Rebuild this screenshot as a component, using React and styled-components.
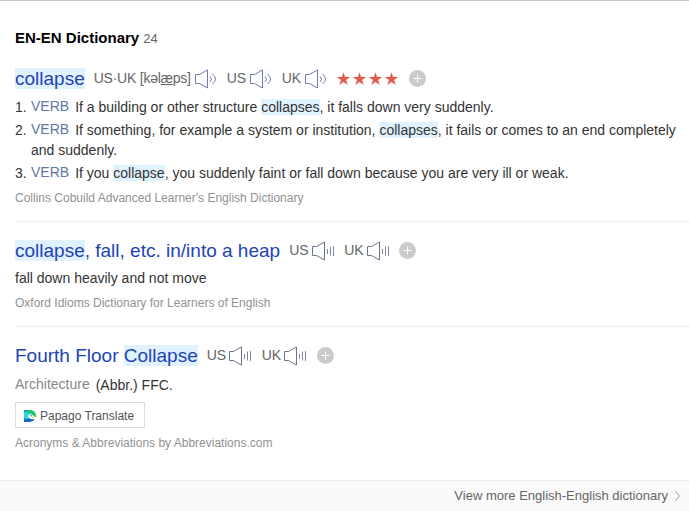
import React from "react";
import styled, { createGlobalStyle } from "styled-components";

const Global = createGlobalStyle`
  body { margin: 0; background: #fff; }
  * { box-sizing: border-box; }
`;

const Page = styled.main`
  display: flex;
  flex-direction: column;
  height: 511px;
  overflow: hidden;
  border-top: 1px solid #c6c6c6;
  background: #fff;
  color: #333;
  font: 14px/20px "Liberation Sans", Arial, sans-serif;
`;

const Header = styled.header`
  display: flex;
  align-items: baseline;
  gap: 4px;
  height: 61px;
  padding: 27px 0 0 15px;
`;

const Title = styled.h2`
  margin: 0;
  color: #000;
  font-size: 15px;
  line-height: 20px;
`;

const Count = styled.span`
  color: #666;
  font-size: 13px;
`;

const Entry = styled.section`
  height: ${(p) => p.$height}px;
  margin-left: 15px;
  padding-top: ${(p) => p.$top}px;
  border-bottom: ${(p) => (p.$last ? "0" : "1px solid #ececec")};
`;

const Heading = styled.div`
  display: flex;
  align-items: center;
  height: 24px;
  white-space: nowrap;
`;

const Word = styled.h3`
  margin: 0 9px 0 0;
  color: #2243b6;
  font-size: 19px;
  font-weight: 400;
  line-height: 24px;
`;

const Mark = styled.mark`
  background: #e1f2ff;
  color: inherit;
`;

const Pron = styled.span`
  display: flex;
  align-items: center;
  width: ${(p) => p.$width}px;
  color: #666;
`;

const Accent = styled.span`
  margin-right: ${(p) => p.$gap || 4}px;
  padding-bottom: 2px;
  letter-spacing: ${(p) => p.$spacing || 0}px;
`;

const Stars = styled.span`
  display: flex;
  gap: 2px;
  margin-right: 10px;
`;

const AddButton = styled.button`
  display: flex;
  width: 17px;
  height: 17px;
  margin-bottom: 1px;
  padding: 0;
  border: 0;
  border-radius: 50%;
  background: #cbcbcb;
`;

const Meanings = styled.ol`
  display: flex;
  flex-direction: column;
  gap: 3px;
  margin: 6px 0 0;
  padding: 0;
  list-style: none;
`;

const Meaning = styled.li`
  display: grid;
  grid-template-columns: 16px 1fr;
`;

const Tag = styled.span`
  margin-right: 6px;
  color: ${(p) => (p.$muted ? "#888" : "#6078a6")};
  line-height: 16px;
  vertical-align: 1px;
`;

const Text = styled.p`
  margin: ${(p) => p.$top || 0}px 0 0;
`;

const Source = styled.p`
  margin: ${(p) => p.$top}px 0 0;
  color: #929292;
  font-size: 12px;
  line-height: 16px;
`;

const Translate = styled.button`
  display: flex;
  align-items: center;
  gap: 4px;
  width: 130px;
  height: 26px;
  margin-top: 7px;
  padding: 1px 0 0 8px;
  border: 1px solid #dcdcdc;
  background: #fff;
  color: #555;
  font: 12px/16px "Liberation Sans", Arial, sans-serif;
`;

const Footer = styled.footer`
  display: flex;
  flex: 1;
  align-items: center;
  justify-content: flex-end;
  gap: 7px;
  padding-right: 9px;
  border-top: 1px solid #ebebeb;
  background: #fafafa;
  color: #666;
  font-size: 13px;
`;

const Glyph = styled.svg`
  display: block;
  flex: none;
`;

const Speaker = ({ bars }) => (
  <Glyph width="23" height="20" viewBox="0 0 23 20" fill="none" stroke="#7180ae">
    <path d="M.5 5.5H4.5L12.5 1V19L4.5 14.5H.5Z" stroke={bars ? "#68748e" : "#6a7bb0"} />
    {bars ? (
      <path d="M15.5 8V13M18.5 5.5V14.5M21.5 5V15" stroke="#7f88a8" />
    ) : (
      <path d="M15 7.5Q18 10 15 13M17.5 5Q23.5 10 17.5 15" />
    )}
  </Glyph>
);

const Star = () => (
  <Glyph width="14" height="14" viewBox="0 0 14 14">
    <path fill="#e65b50" d="M6.5 .2 8.1 5H13.2L9.1 7.9 10.7 12.9 6.5 9.9 2.3 12.9 3.9 7.9 -.2 5H4.9Z" />
  </Glyph>
);

const Add = () => (
  <AddButton aria-label="Add">
    <Glyph width="17" height="17" viewBox="0 0 17 17" stroke="#fff">
      <path d="M8.5 4.5V12.5M4.5 8.5H12.5" />
    </Glyph>
  </AddButton>
);

const Parrot = () => (
  <Glyph width="12" height="12" viewBox="0 0 12 12">
    <path fill="#1599df" d="M0 0H6V12H0Z" />
    <path fill="#19c95b" d="M3 0H6.5A5.5 5.5 0 0 1 12 5.7V7H8Q8 3 3 2Z" />
    <path fill="#29d5e6" d="M0 2Q6 1.5 7.5 6L4 9Q1 8 0 8Z" />
    <path fill="#fff" d="M4 6Q5.5 3.2 8.5 4.8L12 8Q8 10 5 8.2Z" />
    <circle cx="6.9" cy="5.8" r=".7" fill="#18566c" />
    <path fill="#f4d44e" d="M8 6.2 10.5 7.7 8 8Z" />
    <path fill="#1769ca" d="M0 9Q3 10 5 8.2Q7 10 11 9Q9 12 6 12H0Z" />
  </Glyph>
);

const Pronunciations = () => (
  <>
    <Pron $width={55}><Accent $gap={3}>US</Accent><Speaker bars /></Pron>
    <Pron $width={55}><Accent $gap={3}>UK</Accent><Speaker bars /></Pron>
    <Add />
  </>
);

export default function App() {
  return (
    <Page>
      <Global />
      <Header>
        <Title>EN-EN Dictionary</Title>
        <Count>24</Count>
      </Header>

      <Entry $height={160} $top={5}>
        <Heading>
          <Word><Mark>collapse</Mark></Word>
          <Pron $width={133}>
            <Accent $spacing={-0.24}>US·UK [kəl<u>æ</u>ps]</Accent>
            <Speaker />
          </Pron>
          <Pron $width={55}><Accent>US</Accent><Speaker /></Pron>
          <Pron $width={55}><Accent>UK</Accent><Speaker /></Pron>
          <Stars><Star /><Star /><Star /><Star /></Stars>
          <Add />
        </Heading>
        <Meanings>
          <Meaning>
            <span>1.</span>
            <span><Tag>VERB</Tag>If a building or other structure <Mark>collapses</Mark>, it falls down very suddenly.</span>
          </Meaning>
          <Meaning>
            <span>2.</span>
            <span><Tag>VERB</Tag>If something, for example a system or institution, <Mark>collapses</Mark>, it fails or comes to an end completely and suddenly.</span>
          </Meaning>
          <Meaning>
            <span>3.</span>
            <span><Tag>VERB</Tag>If you <Mark>collapse</Mark>, you suddenly faint or fall down because you are very ill or weak.</span>
          </Meaning>
        </Meanings>
        <Source $top={7}>Collins Cobuild Advanced Learner's English Dictionary</Source>
      </Entry>

      <Entry $height={105} $top={17}>
        <Heading>
          <Word><Mark>collapse</Mark>, fall, etc. in/into a heap</Word>
          <Pronunciations />
        </Heading>
        <Text $top={5}>fall down heavily and not move</Text>
        <Source $top={7}>Oxford Idioms Dictionary for Learners of English</Source>
      </Entry>

      <Entry $height={153} $top={17} $last>
        <Heading>
          <Word>Fourth Floor <Mark>Collapse</Mark></Word>
          <Pronunciations />
        </Heading>
        <Text $top={7}><Tag $muted>Architecture</Tag>(Abbr.) FFC.</Text>
        <Translate><Parrot />Papago Translate</Translate>
        <Source $top={7}>Acronyms &amp; Abbreviations by Abbreviations.com</Source>
      </Entry>

      <Footer>
        View more English-English dictionary
        <Glyph width="5" height="10" viewBox="0 0 5 10" fill="none" stroke="#999">
          <path d="M.5.5 4.5 5 .5 9.5" />
        </Glyph>
      </Footer>
    </Page>
  );
}
